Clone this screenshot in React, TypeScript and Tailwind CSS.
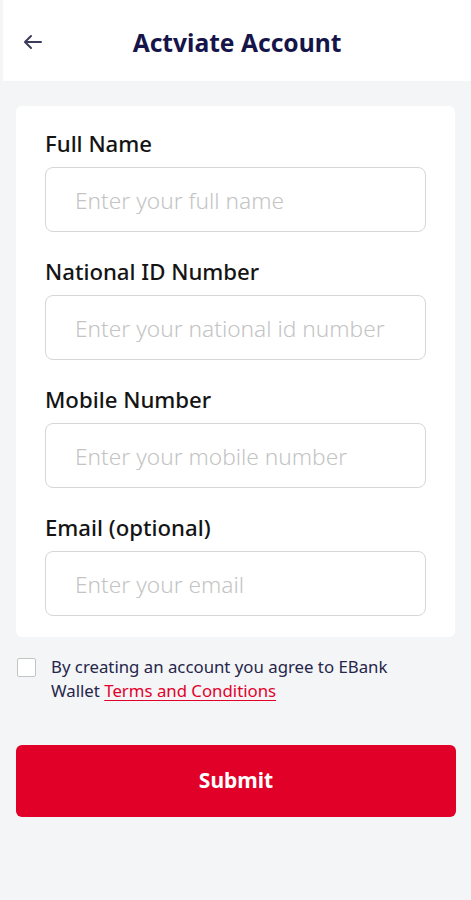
import React from 'react';

const fields = [
  { label: 'Full Name', placeholder: 'Enter your full name' },
  { label: 'National ID Number', placeholder: 'Enter your national id number' },
  { label: 'Mobile Number', placeholder: 'Enter your mobile number' },
  { label: 'Email (optional)', placeholder: 'Enter your email' },
];

export default function App() {
  return (
    <div className="w-[471px] h-[900px] bg-[#f3f5f7] font-['Noto_Sans',sans-serif]">
      <div className="relative h-[81px] ml-[3px] bg-white flex items-center justify-center">
        <button className="absolute left-[19px] top-[32px] p-0 text-[#3c3c5c]">
          <svg width="22" height="20" viewBox="0 0 22 20" fill="none" stroke="currentColor" strokeWidth="2" strokeLinecap="round" strokeLinejoin="round">
            <path d="M19 10H4" />
            <path d="M9 4L3 10l6 6" />
          </svg>
        </button>
        <h1 className="text-[24.6px] font-bold text-[#15154a] pt-[6px]">Actviate Account</h1>
      </div>

      <div className="mx-[16px] mt-[25px] bg-white rounded-[6px] pt-[24px] pb-[21px] px-[29px] flex flex-col gap-[26px]">
        {fields.map((f) => (
          <div key={f.label} className="flex flex-col gap-[9px]">
            <label className="text-[22.2px] leading-[28px] font-medium text-[#141414] whitespace-nowrap">{f.label}</label>
            <div className="h-[65px] border border-[#d6d6d6] rounded-[8px] flex items-center px-[29px] pt-[3px]">
              <span className="text-[22.7px] font-light text-[#c4c4c4] whitespace-nowrap">{f.placeholder}</span>
            </div>
          </div>
        ))}
      </div>

      <div className="flex gap-[15px] pl-[17px] pr-[20px] mt-[18px]">
        <div className="w-[19px] h-[19px] mt-[3px] shrink-0 border border-[#c4c4c4] rounded-[2px] bg-white" />
        <p className="text-[16.8px] leading-[24px] text-[#26264a] w-[370px]">
          By creating an account you agree to EBank
          <br />
          Wallet <span className="text-[#e2002b] underline underline-offset-[3px]">Terms and Conditions</span>
        </p>
      </div>

      <button className="mx-[16px] mt-[42px] w-[440px] h-[72px] bg-[#e10027] rounded-[6px] text-white text-[21px] font-bold">
        Submit
      </button>
    </div>
  );
}
